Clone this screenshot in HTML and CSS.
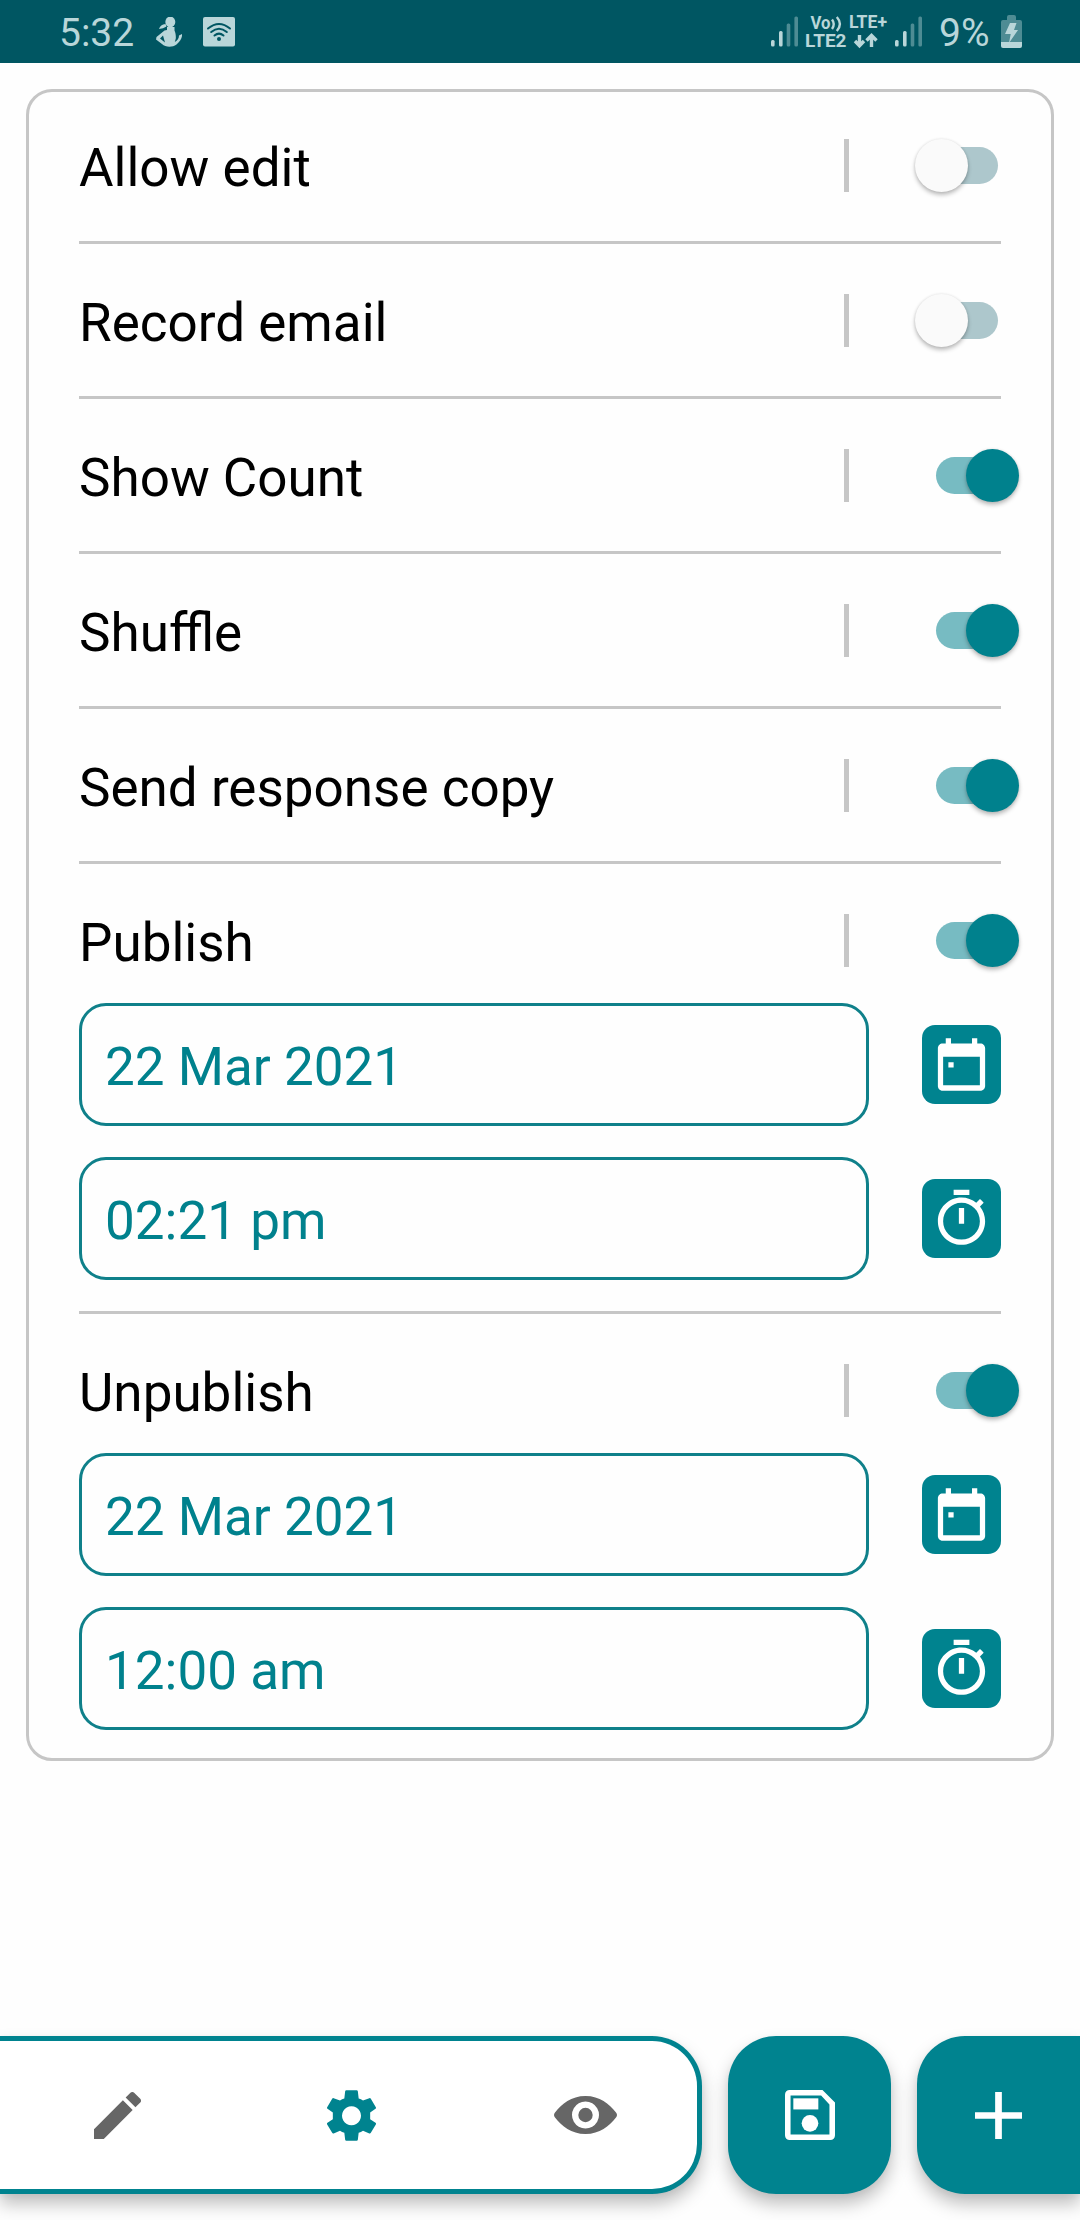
FILE: index.html
```html
<!DOCTYPE html>
<html lang="en">
<head>
<meta charset="utf-8">
<title>Form settings</title>
<link rel="stylesheet" href="styles.css">
</head>
<body>
<svg class="defs" aria-hidden="true">
  <symbol id="calendar" viewBox="0 0 24 24"><path fill-rule="evenodd" d="M7 11.1h2v2H7zM19.2 4H18V2h-2v2H8V2H6v2H4.8C3.8 4 3 4.8 3 5.8v14.4c0 1 .8 1.800 1.800 1.800h14.400c1 0 1.800-.8 1.800-1.800V5.800C21 4.800 20.200 4 19.200 4zM19 19.900H5V9h14z"/></symbol>
  <symbol id="timer" viewBox="0 0 24 24"><path d="M15 1H9v2h6V1zm-4 13h2V8h-2v6zm8.030-6.610l1.420-1.420c-.43-.51-.9-.99-1.410-1.410l-1.420 1.420C16.070 4.740 14.120 4 12 4c-4.970 0-9 4.030-9 9s4.020 9 9 9 9-4.030 9-9c0-2.120-.74-4.070-1.970-5.610zM12 20c-3.870 0-7-3.130-7-7s3.130-7 7-7 7 3.130 7 7-3.130 7-7 7z"/></symbol>
</svg>

<header class="status-bar">
  <span class="clock">5:32</span>
  <svg class="mascot" viewBox="0 0 26 30"><ellipse cx="14.300" cy="5" rx="5" ry="5.400"/><path d="M9.500 7C6 7.500 4 9 3 12l4-.8 3.500-1.800zM11 10l7.500 0 0 3.500C19.500 16 20 18 19.800 21.500l-1 3.500C21.500 23.500 23 21.500 23 18.500l3-1.500c.5 4-2 7.500-5.500 10.500-4 3-11 3-14.500-.5L0 22.500l.5-2.500L8.500 13.500 11 13zM7 18.500L4 21.500l5 4z" fill-rule="evenodd"/></svg>
  <svg class="wifi" viewBox="0 0 32 30"><rect width="32" height="29.500" rx="2"/><g class="wifi-arcs"><path d="M5 11.500Q16 2.500 27 11.500"/><path d="M8.200 15Q16 8.500 23.800 15"/><path d="M11.500 18.500Q16 14.700 20.500 18.500"/></g><circle class="wifi-dot" cx="16" cy="22" r="2"/></svg>
  <svg class="network" viewBox="0 -8 152 48">
    <g id="bars1"><rect x="0" y="25" width="3.600" height="6.500" rx="1.500"/><rect x="8" y="16" width="3.600" height="15.500" rx="1.500"/><g class="dim"><rect x="15.700" y="8.500" width="3.600" height="23" rx="1.500"/><rect x="23.400" y="1.500" width="3.600" height="30" rx="1.500"/></g></g>
    <use href="#bars1" x="124"/>
    <text class="net-label" x="39.500" y="14" textLength="20" lengthAdjust="spacingAndGlyphs">Vo</text>
    <path class="wave" d="M61 4.500Q64.500 9 61 14M65.800 2Q72 9 65.800 16"/>
    <text class="net-label" x="78" y="12.800" textLength="38" lengthAdjust="spacingAndGlyphs">LTE+</text>
    <text class="net-label" x="34" y="31.800" textLength="41.500" lengthAdjust="spacingAndGlyphs">LTE2</text>
    <path class="arrow" d="M88.500 20v10.500M84 26l4.500 4.700 4.500-4.700M100.500 32V21M95.500 25.500l5-5 5 5"/>
  </svg>
  <span class="battery-level">9%</span>
  <svg class="battery" viewBox="0 0 21 33"><path class="dim" d="M6 5V2q0-2 2-2h5q2 0 2 2v3h4q2 0 2 2v20H0V7q0-2 2-2z"/><path d="M0 27h21v4q0 2-2 2H2q-2 0-2-2z"/><path d="M9 8h6.500l-2.500 7h4L8 28l1.700-9H4z"/></svg>
</header>

<main class="card">
  <div class="row"><span class="label">Allow edit</span><i class="bar"></i><span class="switch"></span></div>
  <hr>
  <div class="row"><span class="label">Record email</span><i class="bar"></i><span class="switch"></span></div>
  <hr>
  <div class="row"><span class="label">Show Count</span><i class="bar"></i><span class="switch on"></span></div>
  <hr>
  <div class="row"><span class="label">Shuffle</span><i class="bar"></i><span class="switch on"></span></div>
  <hr>
  <div class="row"><span class="label">Send response copy</span><i class="bar"></i><span class="switch on"></span></div>
  <hr>
  <div class="row"><span class="label">Publish</span><i class="bar"></i><span class="switch on"></span></div>
  <div class="fields">
    <div class="field"><div class="value">22 Mar 2021</div><button class="pick"><svg><use href="#calendar"/></svg></button></div>
    <div class="field"><div class="value">02:21 pm</div><button class="pick"><svg><use href="#timer"/></svg></button></div>
  </div>
  <hr class="after-fields">
  <div class="row"><span class="label">Unpublish</span><i class="bar"></i><span class="switch on"></span></div>
  <div class="fields">
    <div class="field"><div class="value">22 Mar 2021</div><button class="pick"><svg><use href="#calendar"/></svg></button></div>
    <div class="field"><div class="value">12:00 am</div><button class="pick"><svg><use href="#timer"/></svg></button></div>
  </div>
</main>

<footer class="bottom">
  <nav class="tabs">
    <a class="tab"><svg class="pencil" viewBox="3 3 18 18"><path d="M20.710 7.040c.39-.39.39-1.040 0-1.410l-2.340-2.340c-.37-.39-1.020-.39-1.410 0l-1.840 1.830 3.750 3.750zM3 17.250V21h3.750L17.810 9.930l-3.750-3.750z"/></svg></a>
    <a class="tab active"><svg class="gear" viewBox="978 237 147 152"><path fill-rule="evenodd" d="M1036 237h31q3 0 3.500 3l2.500 22q7 2 13 6l19-7q3-1 4.500 2l15 25q1.500 3-1 5l-16 11v20l16 11q2.500 2 1 5l-15 25q-1.500 3-4.500 2l-19-8q-6 4-13 6l-2.500 21q-.5 3-3.500 3h-31q-3 0-3.500-3l-2.500-21q-7-2-13-6l-19 8q-3 1-4.500-2l-15-25q-1.500-3 1-5l16-11v-20l-16-11q-2.500-2-1-5l15-25q1.500-3 4.500-2l19 7q6-4 13-6l2.500-22q.5-3 3.500-3zM1051.500 285a28.500 28.500 0 1 0 .01 0z"/></svg></a>
    <a class="tab"><svg class="eye" viewBox="0 0 63 38"><path fill-rule="evenodd" d="M31.500 0C46 0 55 8 62 16.500Q64 19 62 21.500C55 30 46 38 31.500 38S8 30 1 21.500Q-1 19 1 16.500C8 8 17 0 31.500 0zM31.500 5.500a13.500 13.500 0 1 0 .01 0z"/><circle cx="31.500" cy="19" r="7.200"/></svg></a>
  </nav>
  <button class="action"><svg class="save" viewBox="3 3 18 18"><path fill-rule="evenodd" d="M16.500 3H4.700C3.700 3 3 3.700 3 4.700v14.600c0 1 .7 1.700 1.700 1.700h14.600c1 0 1.700-.7 1.700-1.700V7.500zM19 19H5V5h11l3 3.200z"/><path d="M6 6h9v4H6z"/><circle cx="12" cy="15" r="3"/></svg></button>
  <button class="action last"><svg class="plus" viewBox="0 0 14 14"><path d="M6 0h2v6h6v2H8v6H6V8H0V6h6z"/></svg></button>
</footer>
</body>
</html>
```

FILE: styles.css
```css
* { box-sizing: border-box; }

body {
  margin: 0;
  height: 2220px;
  display: flex;
  flex-direction: column;
  overflow: hidden;
  background: #fefefe;
  font-family: Roboto, "Liberation Sans", sans-serif;
  color: #000;
}

.defs { display: none; }
svg { display: block; fill: currentColor; flex: none; }
button { border: 0; padding: 0; font: inherit; }

/* Status bar */
.status-bar {
  flex: none;
  height: 63px;
  padding: 0 58px 0 59px;
  display: flex;
  align-items: flex-start;
  background: #005662;
  color: #b9d6d9;
  font-size: 39px;
  line-height: 46px;
}
.clock, .battery-level { padding-top: 10px; }
.clock { width: 97px; }
.mascot { width: 26px; height: 30px; margin-top: 17px; }
.wifi { width: 32px; height: 30px; margin: 17px auto 0 21px; }
.wifi-arcs { fill: none; stroke: #005662; stroke-width: 2; stroke-linecap: round; }
.wifi-dot { fill: #005662; }
.network { width: 152px; height: 48px; margin-top: 7px; overflow: visible; }
.net-label { font-size: 17.8px; font-weight: 700; }
.wave { fill: none; stroke: currentColor; stroke-width: 2.4; }
.arrow { fill: none; stroke: currentColor; stroke-width: 3.4; }
.dim { opacity: .42; }
.battery-level { width: 62px; margin-left: 16px; }
.battery { width: 21px; height: 33px; margin-top: 15px; }

/* Settings card */
.card {
  flex: none;
  margin: 26px 26px 0;
  padding: 47px 50px 28px;
  border: 3px solid #c6c6c6;
  border-radius: 26px;
}
.card hr {
  height: 3px;
  margin: 49px 0 50px;
  border: 0;
  background: #c6c6c6;
}
.card .after-fields { margin-top: 31px; }

.row { display: flex; align-items: center; height: 53px; }
.label { flex: 1; padding-top: 4px; font-size: 53px; line-height: 62px; }
.bar { width: 5px; height: 53px; margin-right: 87px; background: #c6c6c6; }

.switch {
  position: relative;
  width: 62px;
  height: 37px;
  margin-right: 3px;
  border-radius: 19px;
  background: #adc7cc;
}
.switch::after {
  content: "";
  position: absolute;
  top: -8px;
  left: -21px;
  width: 53px;
  height: 53px;
  border-radius: 50%;
  background: #fafafa;
  box-shadow: 0 3px 4px rgba(0, 0, 0, .25), 0 0 3px rgba(0, 0, 0, .1);
}
.switch.on { background: #77bbc2; }
.switch.on::after { left: 30px; background: #00818d; }

.fields { display: flex; flex-direction: column; gap: 31px; margin-top: 36px; }
.field { display: flex; align-items: center; gap: 53px; }
.value {
  flex: 1;
  height: 123px;
  padding: 30px 23px 0;
  border: 3px solid #0f808a;
  border-radius: 27px;
  color: #00818d;
  font-size: 53px;
  line-height: 62px;
}
.pick {
  display: grid;
  place-items: center;
  width: 79px;
  height: 79px;
  border-radius: 13px;
  background: #00838f;
  color: #fff;
}
.pick svg { width: 63px; height: 63px; }

/* Bottom navigation */
.bottom {
  display: flex;
  gap: 26px;
  height: 158px;
  margin-top: auto;
  margin-bottom: 26px;
}
.tabs, .action { box-shadow: 0 10px 17px rgba(0, 0, 0, .25), 0 2px 6px rgba(0, 0, 0, .04); }
.tabs {
  display: grid;
  grid-template-columns: repeat(3, 234px);
  width: 702px;
  border: 5px solid #00838f;
  border-left: 0;
  border-radius: 0 50px 50px 0;
  background: #fff;
}
.tab { display: grid; place-items: center; color: #666; }
.tab.active { color: #00838f; }
.pencil { width: 47px; height: 47px; }
.gear { width: 49px; height: 51px; }
.eye { width: 63px; height: 38px; }

.action {
  display: grid;
  place-items: center;
  width: 163px;
  border-radius: 48px;
  background: #00838f;
  color: #fff;
}
.action.last { border-radius: 48px 0 0 48px; }
.save { width: 50px; height: 50px; }
.plus { width: 47px; height: 47px; }
```
